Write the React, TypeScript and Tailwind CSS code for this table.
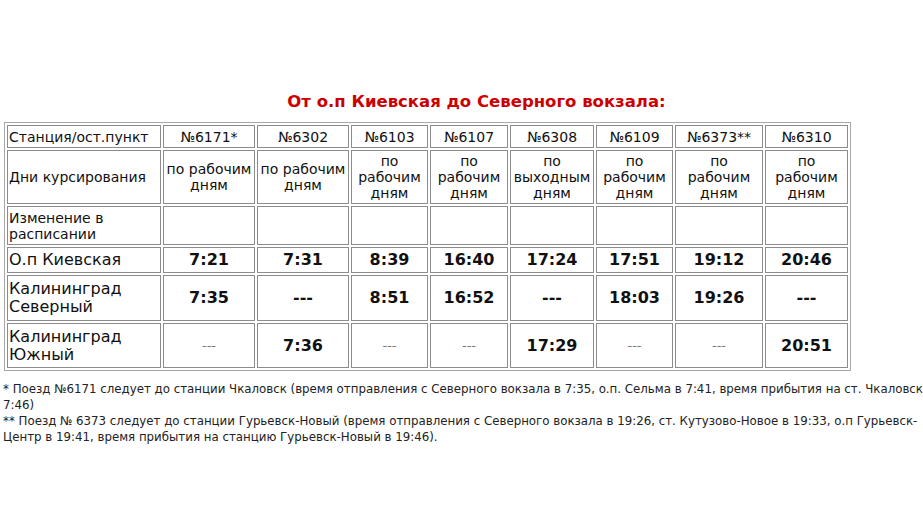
const trains = [
  { n: "№6171*", days: ["по рабочим", "дням"], kiev: "7:21", sev: "7:35", yuzh: "" },
  { n: "№6302", days: ["по рабочим", "дням"], kiev: "7:31", sev: "---", yuzh: "7:36" },
  { n: "№6103", days: ["по", "рабочим", "дням"], kiev: "8:39", sev: "8:51", yuzh: "" },
  { n: "№6107", days: ["по", "рабочим", "дням"], kiev: "16:40", sev: "16:52", yuzh: "" },
  { n: "№6308", days: ["по", "выходным", "дням"], kiev: "17:24", sev: "---", yuzh: "17:29" },
  { n: "№6109", days: ["по", "рабочим", "дням"], kiev: "17:51", sev: "18:03", yuzh: "" },
  { n: "№6373**", days: ["по", "рабочим", "дням"], kiev: "19:12", sev: "19:26", yuzh: "" },
  { n: "№6310", days: ["по", "рабочим", "дням"], kiev: "20:46", sev: "---", yuzh: "20:51" },
]

// widths of the train columns, the station column is set on its own cell
const widths = ["w-[92px]", "w-[92px]", "w-[77px]", "w-[78px]", "w-[84px]", "w-[77px]", "w-[88px]", "w-[83px]"]

const cell = "border border-[#8c8c8c] px-[1px] py-0 align-middle"

function Time({ t }: { t: string }) {
  if (!t) return <span className="text-[13px] font-normal text-[#777]">---</span>
  return <span className="text-[16px] font-bold">{t}</span>
}

export default function App() {
  return (
    <div className="w-[923px] h-[532px] overflow-hidden bg-white text-[#111] font-['DejaVu_Sans',sans-serif]">
      <div className="w-[949px] pt-[92px] pl-[4px]">
        <h2 className="text-center text-[16.5px] leading-[20px] font-bold text-[#cc0000]">
          От о.п Киевская до Северного вокзала:
        </h2>

        <table className="mt-[10px] border-separate border-spacing-[2px] border border-[#a6a6a6] text-[14px] leading-[16px]">
          <tbody>
            <tr className="h-[23px]">
              <td className={`${cell} w-[154px] text-left`}>Станция/ост.пункт</td>
              {trains.map((tr, i) => (
                <td key={tr.n} className={`${cell} ${widths[i]} text-center`}>{tr.n}</td>
              ))}
            </tr>
            <tr className="h-[54px]">
              <td className={`${cell} text-left`}>Дни курсирования</td>
              {trains.map((tr) => (
                <td key={tr.n} className={`${cell} text-center`}>
                  {tr.days.map((d, j) => (
                    <div key={j}>{d}</div>
                  ))}
                </td>
              ))}
            </tr>
            <tr className="h-[39px]">
              <td className={`${cell} text-left`}>
                Изменение в<br />расписании
              </td>
              {trains.map((tr) => (
                <td key={tr.n} className={cell}></td>
              ))}
            </tr>
            <tr className="h-[26px]">
              <td className={`${cell} text-left text-[16px] leading-[18px]`}>О.п Киевская</td>
              {trains.map((tr) => (
                <td key={tr.n} className={`${cell} text-center`}><Time t={tr.kiev} /></td>
              ))}
            </tr>
            <tr className="h-[46px]">
              <td className={`${cell} text-left text-[16px] leading-[18px]`}>
                Калининград<br />Северный
              </td>
              {trains.map((tr) => (
                <td key={tr.n} className={`${cell} text-center`}><Time t={tr.sev} /></td>
              ))}
            </tr>
            <tr className="h-[45px]">
              <td className={`${cell} text-left text-[16px] leading-[18px]`}>
                Калининград<br />Южный
              </td>
              {trains.map((tr) => (
                <td key={tr.n} className={`${cell} text-center`}><Time t={tr.yuzh} /></td>
              ))}
            </tr>
          </tbody>
        </table>

        <div className="mt-[10px] -ml-[1px] text-[11.8px] leading-[16px] text-[#222] whitespace-nowrap">
          <p>* Поезд №6171 следует до станции Чкаловск (время отправления с Северного вокзала в 7:35, о.п. Сельма в 7:41, время прибытия на ст. Чкаловск</p>
          <p>7:46)</p>
          <p>** Поезд № 6373 следует до станции Гурьевск-Новый (время отправления с Северного вокзала в 19:26, ст. Кутузово-Новое в 19:33, о.п Гурьевск-</p>
          <p>Центр в 19:41, время прибытия на станцию Гурьевск-Новый в 19:46).</p>
        </div>
      </div>
    </div>
  )
}
